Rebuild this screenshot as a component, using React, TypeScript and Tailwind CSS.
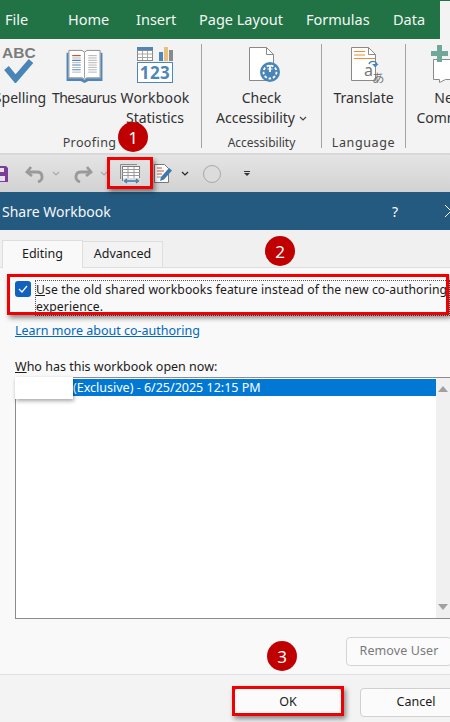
const font = "font-['Noto_Sans','Open_Sans',sans-serif]";

function Chevron({ className = "" }: { className?: string }) {
  return (
    <svg width="8" height="5" viewBox="0 0 8 5" className={className}>
      <path d="M1 1l3 3 3-3" fill="none" stroke="currentColor" strokeWidth="1.2" />
    </svg>
  );
}

function SpellIcon() {
  return (
    <svg width="40" height="40" viewBox="0 0 40 40">
      <text x="2" y="15" fontFamily="'Liberation Sans',sans-serif" fontWeight="700" fontSize="15.5" fill="#7b7b7b">ABC</text>
      <path d="M6.500 25l9 11L31 18" fill="none" stroke="#4a85b8" strokeWidth="6" />
    </svg>
  );
}

function BookIcon() {
  return (
    <svg width="37" height="34" viewBox="0 0 38 36">
      <path d="M0 4h2v27h15l2 2 2-2h15V4h2v30H23l-4 2-4-2H0z" fill="#4f86b8" />
      <path d="M2.500 1.500h14l2.500 2 2.500-2h14v29h-14l-2.500 1.500-2.500-1.500h-14z" fill="#fff" stroke="#8a8a8a" />
      <path d="M19 3v28" stroke="#9a9a9a" />
      <path d="M6 7h9" stroke="#c8492a" strokeWidth="1.200" />
      <path d="M6 12h9M6 17h9M6 22h9" stroke="#4f86b8" strokeWidth="1.200" />
      <path d="M6 9.500h9M6 14.500h9M6 19.500h9M6 24.500h9M23 7h9M23 9.500h9M23 12h9M23 14.500h9M23 17h9M23 19.500h9M23 22h9M23 24.500h9" stroke="#b0b0b0" />
    </svg>
  );
}

function StatsIcon() {
  return (
    <svg width="37" height="36" viewBox="0 0 37 36">
      <rect x="0" y="0" width="16" height="4" fill="#4f86b8" />
      <rect x="0.500" y="3.500" width="15" height="10" fill="#fff" stroke="#8a8a8a" />
      <path d="M5.500 4v9M10.500 4v9M1 7h14M1 10.500h14" stroke="#a8a8a8" />
      <rect x="22" y="5" width="4" height="9" fill="#4f86b8" />
      <rect x="27" y="0" width="4" height="14" fill="#e8bf7c" />
      <rect x="32" y="3" width="4" height="11" fill="#8a8a8a" />
      <rect x="0.500" y="15.500" width="35" height="20" fill="#fff" stroke="#4f86b8" />
      <text x="18" y="32" textAnchor="middle" fontFamily="'Noto Sans',sans-serif" fontWeight="700" fontSize="17" letterSpacing="0.5" fill="#4f86b8">123</text>
    </svg>
  );
}

function CheckIcon() {
  return (
    <svg width="32" height="36" viewBox="0 0 32 36" className="ml-[6px]">
      <path d="M0.500 0.500h17l7 7v26h-24z" fill="#fff" stroke="#8a8a8a" />
      <path d="M17.500 0.500v7h7" fill="none" stroke="#8a8a8a" />
      <circle cx="21" cy="25" r="10" fill="#4a85b8" />
      <circle cx="21" cy="25" r="6.500" fill="none" stroke="#fff" strokeWidth="1.800" strokeDasharray="2.600 1.800" />
      <path d="M21 18v7" stroke="#fff" strokeWidth="1.800" />
      <path d="M18.500 22h5" stroke="#fff" strokeWidth="1" />
    </svg>
  );
}

function TranslateIcon() {
  return (
    <svg width="36" height="36" viewBox="0 0 36 36" className="ml-[10px]">
      <path d="M0.500 0.500h17l7 7v26h-24z" fill="#fff" stroke="#8a8a8a" />
      <path d="M17.500 0.500v7h7" fill="none" stroke="#8a8a8a" />
      <path d="M3 4.500h11M3 8h11M3 11.500h21" stroke="#ed8b32" strokeWidth="1.100" />
      <path d="M18 17c1-3 6-4 8 0" fill="none" stroke="#4a85b8" strokeWidth="1.400" />
      <path d="M21 17h6.500l-3.250 3.500z" fill="#4a85b8" />
      <text x="13" y="29" fontFamily="'Noto Sans',sans-serif" fontSize="16" fill="#777">a</text>
      <text x="21" y="35.500" fontFamily="'Noto Sans CJK JP',sans-serif" fontSize="12.500" fill="#777">あ</text>
    </svg>
  );
}

function CommentIcon() {
  return (
    <svg width="36" height="38" viewBox="0 0 36 38">
      <path d="M2.500 14.500v20h6v3l6-3h21v-20z" fill="#fff" stroke="#8a8a8a" />
      <path d="M0 6h6V0h5v6h6v5h-6v6H6v-6H0z" fill="#6fa898" />
    </svg>
  );
}

function Tool({ icon, line1, line2, w, className = "", line1Class = "" }: { icon: React.ReactNode; line1: string; line2?: React.ReactNode; w: string; className?: string; line1Class?: string }) {
  return (
    <div className={`flex shrink-0 flex-col items-center ${w} ${className}`}>
      <div className="flex h-[39px] items-end">{icon}</div>
      <div className={`mt-[5px] text-[14px] leading-[20px] whitespace-nowrap text-[#303030] ${line1Class}`}>{line1}</div>
      <div className="text-[14px] leading-[20px] whitespace-nowrap text-[#303030]">{line2}</div>
    </div>
  );
}

function Group({ label, w, children, last = false, labelClass = "" }: { label: string; w: string; children?: React.ReactNode; last?: boolean; labelClass?: string }) {
  return (
    <div className={`flex shrink-0 flex-col ${w}`}>
      <div className={`mt-[5px] flex h-[104px] flex-col ${last ? "" : "border-r border-[#a3a3a3]"}`}>
        <div className="flex flex-1">{children}</div>
        <div className={`-mb-[3px] text-center leading-[16px] text-[#404040] ${labelClass}`}>{label}</div>
      </div>
    </div>
  );
}

function Outline({ className }: { className: string }) {
  return <div className={`pointer-events-none absolute border-[3px] border-[#f00000] shadow-[2px_3px_5px_rgba(0,0,0,0.45)] ${className}`} />;
}

function Badge({ n, className }: { n: number; className: string }) {
  return (
    <div className={`absolute flex h-[30px] w-[30px] items-center justify-center rounded-full bg-[#c00000] text-[17px] leading-none text-white ${className}`}>
      {n}
    </div>
  );
}

export default function App() {
  return (
    <div className={`relative flex h-[722px] w-[450px] flex-col overflow-hidden bg-[#f3f3f3] ${font}`}>
      {/* Ribbon tabs */}
      <div className="flex h-[39px] shrink-0 bg-[#f3f3f3]">
        <div className="flex w-[440px] items-center bg-[#217346] text-[14.500px] text-[#f4f8f5]">
          <span className="ml-[5px] w-[63px]">File</span>
          <span className="w-[68px]">Home</span>
          <span className="w-[63px]">Insert</span>
          <span className="w-[107px]">Page Layout</span>
          <span className="w-[87px]">Formulas</span>
          <span>Data</span>
        </div>
        <div className="h-[1px] flex-1 bg-[#217346]" />
      </div>

      {/* Ribbon body */}
      <div className="flex h-[114px] shrink-0 overflow-hidden bg-[#f3f3f3]">
        <Group label="Proofing" w="w-[202px]" labelClass="pr-[22px] text-[12.500px] tracking-[0.4px]">
          <div className="flex w-full">
            <Tool icon={<SpellIcon />} line1="Spelling" w="w-[48px]" className="-ml-[4px]" />
            <Tool icon={<BookIcon />} line1="Thesaurus" w="w-[74px]" className="ml-[3px]" line1Class="tracking-[-0.5px]" />
            <Tool icon={<StatsIcon />} line1="Workbook" line2="Statistics" w="w-[68px]" line1Class="tracking-[0.2px]" />
          </div>
        </Group>
        <Group label="Accessibility" w="w-[120px]" labelClass="text-[12px]">
          <Tool
            icon={<CheckIcon />}
            line1="Check"
            line2={
              <span className="inline-flex items-center gap-[4px]">
                Accessibility <Chevron className="text-[#444]" />
              </span>
            }
            w="w-[119px]"
          />
        </Group>
        <Group label="Language" w="w-[84px]" labelClass="text-[12.500px] tracking-[0.6px]">
          <Tool icon={<TranslateIcon />} line1="Translate" w="w-[83px]" />
        </Group>
        <Group label="" w="w-[44px]" last>
          <Tool icon={<CommentIcon />} line1="New" line2="Comment" w="w-[86px]" />
        </Group>
      </div>

      {/* Quick access toolbar */}
      <div className="flex h-[39px] shrink-0 items-center border-t-2 border-[#d8d8d8] bg-gradient-to-b from-[#e4e4e4] to-[#d2d2d2] text-[#444]">
        <svg width="8" height="16" viewBox="0 0 8 16" className="shrink-0">
          <path d="M0 0h6l2 2v14H0z" fill="#7d3c98" />
          <rect x="0" y="2" width="4" height="4" fill="#e8e0ee" />
          <rect x="0" y="10" width="5" height="5" fill="#e8e0ee" />
        </svg>
        <svg width="20" height="18" viewBox="0 0 20 18" className="ml-[17px] shrink-0">
          <path d="M6 2L2 7l5 4" fill="none" stroke="#9a9a9a" strokeWidth="2.800" />
          <path d="M3 7h9c6 0 7 8 1 10" fill="none" stroke="#9a9a9a" strokeWidth="2.800" />
        </svg>
        <Chevron className="ml-[7px] text-[#aaa]" />
        <svg width="20" height="18" viewBox="0 0 20 18" className="ml-[13px] shrink-0">
          <path d="M14 2l4 5-5 4" fill="none" stroke="#9a9a9a" strokeWidth="2.800" />
          <path d="M17 7H8c-6 0-7 8-1 10" fill="none" stroke="#9a9a9a" strokeWidth="2.800" />
        </svg>
        <Chevron className="ml-[7px] text-[#aaa]" />
        <svg width="21" height="20" viewBox="0 0 21 20" className="ml-[12px] shrink-0">
          <path d="M0.500 15V0.500H17" fill="none" stroke="#8a8a8a" />
          <rect x="2.500" y="2.500" width="17" height="14" fill="#fff" stroke="#7a7a7a" />
          <path d="M2 5.500h18M2 8.500h18M2 11.500h18M8 3v13M14 3v13" stroke="#9a9a9a" />
          <rect x="3" y="14" width="18" height="6" fill="#dcdcdc" />
          <path d="M6 17h11" stroke="#3f78ad" strokeWidth="1.500" />
          <path d="M7 15l-2.500 2L7 19M16 15l2.500 2-2.500 2" fill="none" stroke="#3f78ad" strokeWidth="1.300" />
        </svg>
        <svg width="18" height="19" viewBox="0 0 18 19" className="ml-[13px] shrink-0">
          <path d="M0.500 0.500h10l4 4v14H0.500z" fill="#fff" stroke="#777" />
          <path d="M3 4h5M3 7h7M3 10h5" stroke="#d0503a" />
          <path d="M3 13h4" stroke="#999" />
          <path d="M6 17l1-4 8-9 3 2.500-8 9z" fill="#3f78ad" />
        </svg>
        <Chevron className="ml-[9px] text-[#222]" />
        <div className="ml-[14px] h-[18px] w-[18px] rounded-full border border-[#a8a8a8] bg-[#dcdcdc]" />
        <div className="ml-[23px] flex flex-col items-center gap-[1px]">
          <div className="h-[1px] w-[6px] bg-[#333]" />
          <div className="h-0 w-0 border-x-[3px] border-t-[3px] border-x-transparent border-t-[#333]" />
        </div>
      </div>

      {/* Dialog title */}
      <div className="flex h-[38px] shrink-0 items-center bg-[#255a80] text-white">
        <span className="ml-[2px] text-[14px] text-[#f4f7fa]">Share Workbook</span>
        <span className="ml-auto text-[14px]">?</span>
        <svg width="5" height="12" viewBox="0 0 5 12" className="ml-[47px] shrink-0">
          <path d="M0 0l6 6-6 6" fill="none" stroke="#fff" />
        </svg>
      </div>

      {/* Tabs */}
      <div className="flex h-[37px] shrink-0 items-end bg-[#f0f0f0] pl-[2px] text-[12.500px] text-[#1a1a1a]">
        <div className="relative top-[1px] flex h-[28px] w-[81px] items-center justify-center border border-b-0 border-[#dedede] bg-[#f9f9f9]">Editing</div>
        <div className="flex h-[26px] w-[80px] items-center justify-center border border-b-0 border-l-0 border-[#dedede] bg-[#f3f3f3]">Advanced</div>
      </div>

      {/* Tab content */}
      <div className="flex h-[407px] shrink-0 flex-col border-t border-[#dedede] bg-[#f9f9f9] text-[12.500px] text-[#1a1a1a]">
        <div className="mt-[12px] flex pl-[15px]">
          <div className="mt-[1px] flex h-[16px] w-[16px] shrink-0 items-center justify-center rounded-[3px] bg-[#0f62c0]">
            <svg width="10" height="8" viewBox="0 0 10 8">
              <path d="M1 4l3 3 5-6" fill="none" stroke="#fff" strokeWidth="1.200" />
            </svg>
          </div>
          <div className="ml-[4px] w-[415px] border border-dotted border-[#555] text-[12.200px] leading-[17px] tracking-[0.1px] whitespace-nowrap">
            <div><u>U</u>se the old shared workbooks feature instead of the new co-authoring</div>
            <div>experience.</div>
          </div>
        </div>
        <a className="mt-[6px] ml-[15px] text-[#0067c0] underline">Learn more about co-authoring</a>
        <div className="mt-[17px] ml-[15px]"><u>W</u>ho has this workbook open now:</div>
        <div className="ml-[15px] flex h-[242px] border-y border-l border-[#8c8c8c] bg-white">
          <div className="flex-1 pt-[1px]">
            <div className="flex h-[17px] items-center bg-[#0078d4] pt-[2px] pl-[57px] text-white">(Exclusive) - 6/25/2025 12:15 PM</div>
          </div>
          <div className="flex w-[14px] flex-col items-center justify-between bg-[#f0f0f0] py-[8px]">
            <div className="h-0 w-0 border-x-[5px] border-b-[6px] border-x-transparent border-b-[#a0a0a0]" />
            <div className="h-0 w-0 border-x-[5px] border-t-[6px] border-x-transparent border-t-[#a0a0a0]" />
          </div>
        </div>
        <div className="mt-[18px] flex justify-end">
          <div className="-mr-[2px] flex h-[29px] w-[106px] items-center justify-center rounded-[4px] border border-[#d4d4d4] bg-[#fbfbfb] tracking-[0.1px] text-[#7a7a7a]">Remove User</div>
        </div>
      </div>

      {/* Footer */}
      <div className="flex flex-1 items-start border-t border-[#e0e0e0] bg-[#f3f3f3] pt-[13px] pl-[233px] text-[12.500px] text-[#1a1a1a]">
        <div className="flex h-[28px] w-[110px] shrink-0 items-center justify-center rounded-[4px] border border-[#2f6ea8] bg-[#fbfbfb]">OK</div>
        <div className="ml-[17px] flex h-[29px] w-[112px] shrink-0 items-center justify-center rounded-[4px] border border-[#d0d0d0] bg-[#fbfbfb]">Cancel</div>
      </div>

      {/* Annotations */}
      <div className="absolute top-[377px] left-[15px] h-[22px] w-[58px] bg-white shadow-[1px_2px_4px_rgba(0,0,0,0.35)]" />
      <Outline className="top-[157px] left-[107px] h-[32px] w-[46px]" />
      <Outline className="top-[274px] left-[7px] h-[41px] w-[442px]" />
      <Outline className="top-[686px] left-[232px] h-[30px] w-[112px]" />
      <Badge n={1} className="top-[122px] left-[118px]" />
      <Badge n={2} className="top-[236px] left-[265px]" />
      <Badge n={3} className="top-[641px] left-[267px]" />
    </div>
  );
}
